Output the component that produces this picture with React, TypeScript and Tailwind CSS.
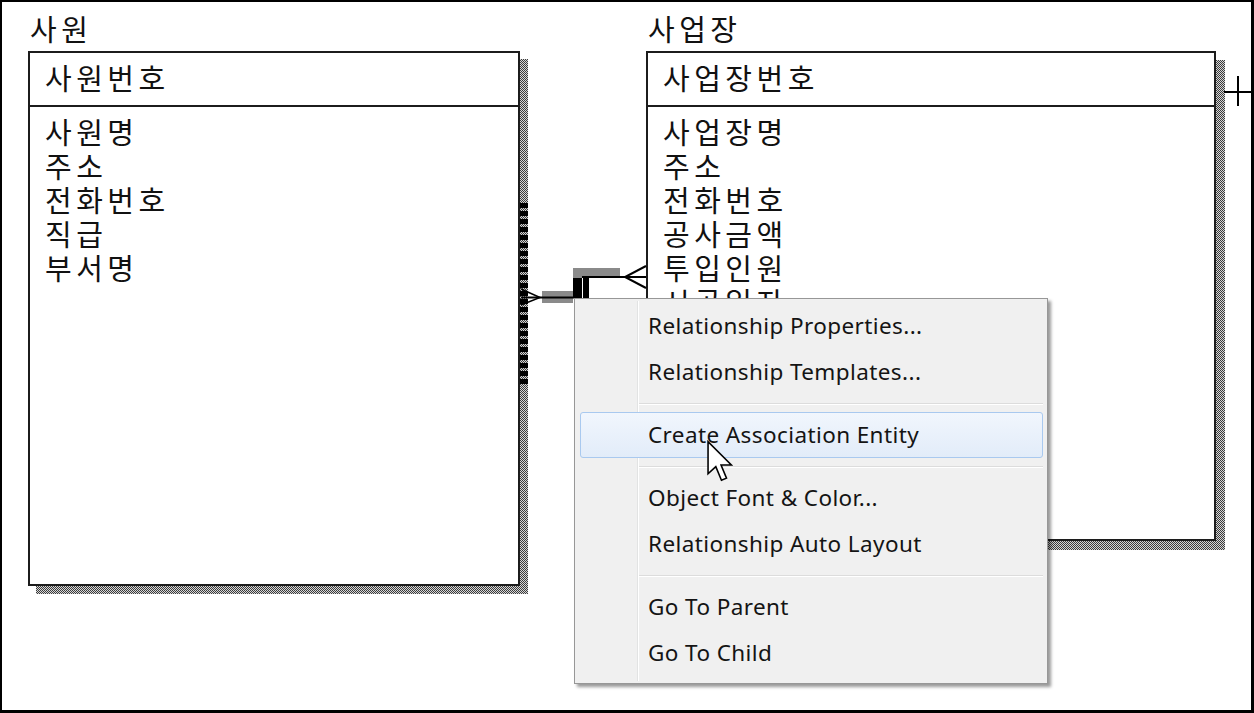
import React from 'react';

interface EntityProps {
    pos: string;
    boxSize: string;
    shadowPos: string;
    title: string;
    keyName: string;
    attrs: string[];
}

const Entity: React.FC<EntityProps> = ({ pos, boxSize, shadowPos, title, keyName, attrs }) => (
    <div className={`absolute ${pos} font-['Noto_Sans_CJK_KR',sans-serif] text-[#111] text-[29px] tracking-[4.5px]`}>
        <div className="h-[40px] leading-[34px] pl-[2px]">{title}</div>
        <div className="relative">
            {/* 점무늬 그림자 */}
            <div
                className={`absolute ${shadowPos} ${boxSize} bg-[repeating-conic-gradient(#3c3c3c_0%_25%,#d6d6d6_0%_50%)] bg-[length:2px_2px]`}
            />
            <div className={`relative ${boxSize} bg-white border-2 border-[#1c1c1c] flex flex-col overflow-hidden`}>
                <div className="h-[54px] shrink-0 border-b-2 border-[#1c1c1c] flex items-center pl-[15px] pb-[3px]">
                    {keyName}
                </div>
                <div className="pt-[7px] pl-[15px] leading-[34px]">
                    {attrs.map((a) => (
                        <div key={a}>{a}</div>
                    ))}
                </div>
            </div>
        </div>
    </div>
);

const MenuItem: React.FC<{ label: string; active?: boolean }> = ({ label, active }) => (
    <div className="h-[46px] relative flex items-center">
        {active && (
            <div className="absolute left-[5px] right-[4px] top-0 bottom-0 rounded-[3px] border border-[#a9c9ef] bg-gradient-to-b from-[#f1f6fd] to-[#e2ecf9]" />
        )}
        <span className="relative pl-[73px]">{label}</span>
    </div>
);

const Separator: React.FC = () => (
    <div className="h-[17px] flex flex-col justify-center pl-[63px] pr-[4px]">
        <div className="h-px bg-[#dcdcdc]" />
        <div className="h-px bg-white" />
    </div>
);

const ContextMenu: React.FC = () => (
    <div className="absolute left-[572px] top-[296px] w-[474px] h-[386px] bg-[#f0f0f0] border border-[#979797] shadow-[3px_3px_3px_rgba(0,0,0,0.4)] pt-[4px] font-['Noto_Sans',sans-serif] text-[22.5px] tracking-[0.4px] text-[#141414]">
        {/* 아이콘 영역 구분선 */}
        <div className="absolute left-[62px] top-[2px] bottom-[2px] w-[2px] flex">
            <div className="w-px bg-[#e2e3e3]" />
            <div className="w-px bg-white" />
        </div>
        <MenuItem label="Relationship Properties..." />
        <MenuItem label="Relationship Templates..." />
        <Separator />
        <MenuItem label="Create Association Entity" active />
        <Separator />
        <MenuItem label="Object Font & Color..." />
        <MenuItem label="Relationship Auto Layout" />
        <Separator />
        <MenuItem label="Go To Parent" />
        <MenuItem label="Go To Child" />
    </div>
);

const dashes = Array.from({ length: 23 }, (_, i) => 203 + i * 8);

const Relationship: React.FC = () => (
    <svg className="absolute left-[-2px] top-[-2px] pointer-events-none" width={1254} height={713}>
        {/* 선택된 관계 표시 */}
        {dashes.map((y) => (
            <rect key={y} x={520} y={y} width={8} height={5} fill="#000" />
        ))}
        <rect x={542} y={291} width={31} height={12} fill="#8a8a8a" />
        <rect x={573} y={268} width={47} height={10} fill="#8a8a8a" />
        <line x1={521} y1={297.5} x2={574} y2={297.5} stroke="#000" strokeWidth={2} />
        <rect x={573} y={278} width={9} height={20} fill="#000" />
        <rect x={583} y={278} width={6} height={20} fill="#000" />
        <line x1={582} y1={277} x2={646} y2={277} stroke="#000" strokeWidth={2} />
        {/* 까마귀발 */}
        <path d="M521 289 L540 297.5 L521 305" fill="none" stroke="#000" strokeWidth={1.5} />
        <path d="M646 266 L625 277 L646 288" fill="none" stroke="#000" strokeWidth={2} />
        {/* 화면 밖으로 이어지는 관계 */}
        <line x1={1224} y1={92} x2={1252} y2={92} stroke="#000" strokeWidth={2} />
        <line x1={1238} y1={76} x2={1238} y2={106} stroke="#000" strokeWidth={2} />
    </svg>
);

const Cursor: React.FC = () => (
    <svg className="absolute left-[705px] top-[438px] pointer-events-none" width={26} height={44} viewBox="0 0 12.4 20.4">
        <path
            d="M0.5 0.5 L0.5 15.8 L4.2 12.4 L6.9 18.9 L9.3 17.9 L6.7 11.6 L11.6 11.6 Z"
            fill="#fff"
            stroke="#000"
            strokeWidth={0.75}
            strokeLinejoin="miter"
        />
    </svg>
);

export default function App() {
    return (
        <div className="w-[1254px] h-[713px] bg-white border-t-2 border-l-2 border-r-[3px] border-b-[3px] border-black relative overflow-hidden">
            <Entity
                pos="left-[26px] top-[9px]"
                boxSize="w-[492px] h-[535px]"
                shadowPos="left-[8px] top-[8px]"
                title="사원"
                keyName="사원번호"
                attrs={['사원명', '주소', '전화번호', '직급', '부서명']}
            />
            <Entity
                pos="left-[644px] top-[9px]"
                boxSize="w-[570px] h-[490px]"
                shadowPos="left-[9px] top-[9px]"
                title="사업장"
                keyName="사업장번호"
                attrs={['사업장명', '주소', '전화번호', '공사금액', '투입인원', '시공일자']}
            />
            <Relationship />
            <ContextMenu />
            <Cursor />
        </div>
    );
}
